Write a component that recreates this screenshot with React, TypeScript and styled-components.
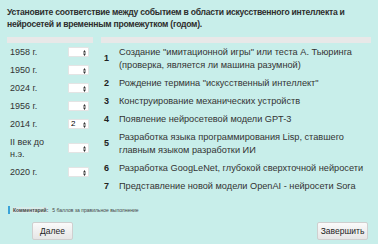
import { createGlobalStyle } from "styled-components";
import styled from "styled-components";

const GlobalStyle = createGlobalStyle`
  html, body {
    margin: 0;
    padding: 0;
    background: #c8eeea;
  }
  body {
    font-family: "Liberation Sans", "DejaVu Sans", sans-serif;
    color: #333333;
  }
`;

const Page = styled.div`
  width: 378px;
  height: 244px;
  overflow: hidden;
  padding: 6px 7px 0 7px;
  box-sizing: border-box;
  background: #c8eeea;
`;

const Title = styled.div`
  font-weight: bold;
  font-size: 8.6px;
  letter-spacing: -0.25px;
  line-height: 12px;
  white-space: nowrap;
  color: #2e2e2e;
  margin-bottom: 7px;
`;

const Tables = styled.div`
  display: flex;
  gap: 8px;
  align-items: flex-start;
`;

const LeftTable = styled.div`
  width: 86px;
  display: flex;
  flex-direction: column;
`;

const RightTable = styled.div`
  width: 270px;
  display: flex;
  flex-direction: column;
`;

const HeadBar = styled.div`
  height: 6px;
  background: #e8e8e8;
`;

const LeftRow = styled.div`
  display: flex;
  align-items: center;
  padding: 3px 4px 3px 3px;
  font-size: 9px;
  line-height: 12px;
`;

const Year = styled.div`
  width: 42px;
  flex: none;
`;

const SelectWrap = styled.div`
  position: relative;
  margin-left: auto;
  width: 21px;
  height: 10px;
  background: #ffffff;
  border: 1px solid #e4e4e4;
  box-sizing: border-box;
  border-radius: 1px;
`;

const Select = styled.select`
  appearance: none;
  border: 0;
  margin: 0;
  padding: 0 0 0 2px;
  width: 100%;
  height: 100%;
  background: transparent;
  font-family: "Liberation Sans", sans-serif;
  font-size: 8px;
  line-height: 8px;
  color: #000;
  display: block;
  outline: 0;
`;

const Arrow = styled.svg`
  position: absolute;
  right: 2px;
  top: 2px;
  pointer-events: none;
`;

const RightRow = styled.div`
  display: flex;
  align-items: center;
  padding: 2.5px 0;
  font-size: 9.2px;
  line-height: 13px;
`;

const Num = styled.div`
  width: 18px;
  flex: none;
  padding-left: 3px;
  box-sizing: border-box;
  font-weight: bold;
  font-size: 9px;
  color: #222;
`;

const Text = styled.div`
  flex: 1;
`;

const Comment = styled.div`
  display: flex;
  align-items: center;
  margin-top: 11px;
  margin-left: 1px;
  border-left: 2px solid #3aa3d8;
  height: 8px;
  padding-left: 3px;
  font-size: 5px;
  color: #444;
`;

const CommentLabel = styled.span`
  font-weight: bold;
  background: #d9ecea;
  margin-right: 4px;
`;

const Buttons = styled.div`
  display: flex;
  justify-content: space-between;
  padding: 0 3px 0 25px;
  margin-top: 8px;
`;

const Button = styled.button<{ $w: number }>`
  width: ${(p) => p.$w}px;
  height: 18px;
  padding: 0;
  border: 1px solid #cfcfcf;
  border-radius: 2px;
  background: linear-gradient(#fafafa, #e6e6e6);
  font-family: "Liberation Sans", sans-serif;
  font-size: 8.5px;
  color: #222;
`;

const years = [
  { y: "1958 г.", v: "" },
  { y: "1950 г.", v: "" },
  { y: "2024 г.", v: "" },
  { y: "1956 г.", v: "" },
  { y: "2014 г.", v: "2" },
  { y: "II век до н.э.", v: "" },
  { y: "2020 г.", v: "" },
];

const events = [
  "Создание \"имитационной игры\" или теста А. Тьюринга (проверка, является ли машина разумной)",
  "Рождение термина \"искусственный интеллект\"",
  "Конструирование механических устройств",
  "Появление нейросетевой модели GPT-3",
  "Разработка языка программирования Lisp, ставшего главным языком разработки ИИ",
  "Разработка GoogLeNet, глубокой сверхточной нейросети",
  "Представление новой модели OpenAI - нейросети Sora",
];

function YearSelect({ value }: { value: string }) {
  return (
    <SelectWrap>
      <Select defaultValue={value}>
        <option value=""></option>
        {[1, 2, 3, 4, 5, 6, 7].map((n) => (
          <option key={n} value={String(n)}>
            {n}
          </option>
        ))}
      </Select>
      <Arrow width="3" height="6" viewBox="0 0 3 6">
        <path d="M0 2.5L1.5 0L3 2.5Z M0 3.5L1.5 6L3 3.5Z" fill="#333" />
      </Arrow>
    </SelectWrap>
  );
}

export default function App() {
  return (
    <Page>
      <GlobalStyle />
      <Title>
        Установите соответствие между событием в области искусственного интеллекта и
        <br />
        нейросетей и временным промежутком (годом).
      </Title>
      <Tables>
        <LeftTable>
          <HeadBar />
          {years.map((r) => (
            <LeftRow key={r.y}>
              <Year>{r.y}</Year>
              <YearSelect value={r.v} />
            </LeftRow>
          ))}
        </LeftTable>
        <RightTable>
          <HeadBar />
          {events.map((e, i) => (
            <RightRow key={i}>
              <Num>{i + 1}</Num>
              <Text>{e}</Text>
            </RightRow>
          ))}
        </RightTable>
      </Tables>
      <Comment>
        <CommentLabel>Комментарий:</CommentLabel>
        5 баллов за правильное выполнение
      </Comment>
      <Buttons>
        <Button $w={41}>Далее</Button>
        <Button $w={51}>Завершить</Button>
      </Buttons>
    </Page>
  );
}
